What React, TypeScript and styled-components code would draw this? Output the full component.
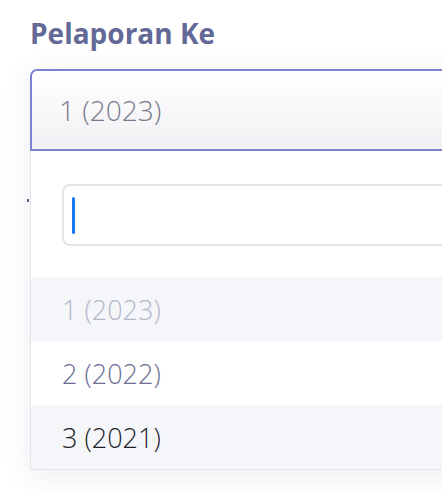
import React from 'react';
import styled, { createGlobalStyle } from 'styled-components';

const GlobalStyle = createGlobalStyle`
  html, body {
    margin: 0;
    padding: 0;
    background: #ffffff;
    overflow: hidden;
  }
  body {
    font-family: "Open Sans", "Noto Sans", sans-serif;
  }
`;

const Page = styled.div`
  position: relative;
  width: 442px;
  height: 490px;
  padding: 16px 0 0 30px;
  box-sizing: border-box;
  overflow: hidden;
`;

const Label = styled.div`
  font-size: 28px;
  line-height: 34px;
  font-weight: 700;
  color: #636996;
  margin-bottom: 19px;
`;

const Field = styled.div`
  width: 440px;
  box-shadow: 0 6px 28px rgba(60, 60, 100, 0.09);
`;

const SelectBox = styled.div`
  height: 82px;
  box-sizing: border-box;
  border: 2px solid #7d81cf;
  border-radius: 7px 0 0 0;
  background: linear-gradient(#ffffff, #f1f1f5);
  display: flex;
  align-items: center;
  padding-left: 27px;
  font-size: 28px;
  font-weight: 300;
  color: #7a7b8c;
`;

const Menu = styled.div`
  background: #ffffff;
  border-left: 1px solid #e4e4ec;
  border-bottom: 1px solid #e2e2ea;
  display: flex;
  flex-direction: column;
`;

const SearchWrap = styled.div`
  padding: 33px 0 31px 31px;
`;

const SearchBox = styled.div`
  height: 62px;
  box-sizing: border-box;
  border: 2px solid #e3e4e9;
  border-right: none;
  border-radius: 8px 0 0 8px;
  display: flex;
  align-items: center;
  padding-left: 8px;
`;

const Caret = styled.span`
  width: 3px;
  height: 37px;
  border-radius: 2px;
  background: #1677ee;
`;

type Tone = 'muted' | 'normal' | 'dark';

const Option = styled.div<{ $tone: Tone; $shade: boolean }>`
  height: 64px;
  display: flex;
  align-items: center;
  padding-left: 31px;
  font-size: 27px;
  font-weight: 300;
  background: ${(p) => (p.$shade ? '#f5f6f9' : '#ffffff')};
  color: ${(p) =>
    p.$tone === 'muted' ? '#b4b6cb' : p.$tone === 'normal' ? '#6d7093' : '#1e1f29'};
`;

const Speck = styled.span`
  position: absolute;
  left: 27px;
  top: 199px;
  width: 2px;
  height: 3px;
  background: #5a5e7e;
`;

const options: { label: string; tone: Tone; shade: boolean }[] = [
  { label: '1 (2023)', tone: 'muted', shade: true },
  { label: '2 (2022)', tone: 'normal', shade: false },
  { label: '3 (2021)', tone: 'dark', shade: true },
];

const App: React.FC = () => {
  return (
    <>
      <GlobalStyle />
      <Page>
        <Speck />
        <Label>Pelaporan Ke</Label>
        <Field>
          <SelectBox>1 (2023)</SelectBox>
          <Menu>
            <SearchWrap>
              <SearchBox>
                <Caret />
              </SearchBox>
            </SearchWrap>
            {options.map((o) => (
              <Option key={o.label} $tone={o.tone} $shade={o.shade}>
                {o.label}
              </Option>
            ))}
          </Menu>
        </Field>
      </Page>
    </>
  );
};

export default App;
